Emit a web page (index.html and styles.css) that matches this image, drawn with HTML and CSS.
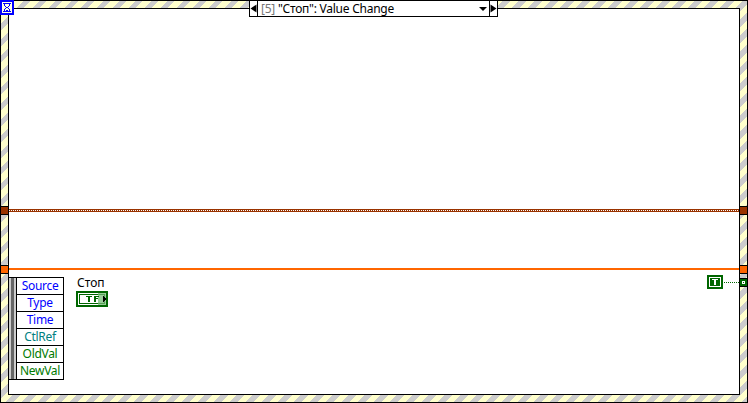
FILE: index.html
```html
<!DOCTYPE html>
<html lang="en">
<head>
<meta charset="utf-8">
<title>Event structure</title>
<link rel="stylesheet" href="styles.css">
</head>
<body>
<main class="event-structure">
  <div class="diagram"></div>

  <svg class="timeout" viewBox="0 0 14 15" shape-rendering="crispEdges">
    <path fill="#0000ff" d="M0 0h14v15H0z"/>
    <path fill="#ffffe6" d="M2 2h10v11H2z"/>
    <path fill="#0000ff" d="M3 3h8v1H3zM4 4h1v2H4zM9 4h1v2H9zM5 6h1v1H5zM8 6h1v1H8zM6 7h2v1H6zM5 8h1v1H5zM8 8h1v1H8zM4 9h1v2H4zM9 9h1v2H9zM6 10h2v1H6zM3 11h8v1H3z"/>
  </svg>

  <header class="selector">
    <span class="step"><svg viewBox="0 0 7 15"><path d="M6.500 3.500v8L.5 7.500z"/></svg></span>
    <span class="case"><span class="index">[5]</span> "Стоп": Value Change</span>
    <svg class="drop" viewBox="0 0 8 4"><path d="M0 0h8L4 4z"/></svg>
    <span class="step next"><svg viewBox="0 0 7 15"><path d="M.5 3.500v8l6-4z"/></svg></span>
  </header>

  <div class="wire cluster"></div>
  <div class="wire numeric"></div>
  <i class="tunnel brown left"></i>
  <i class="tunnel brown right"></i>
  <i class="tunnel orange left"></i>
  <i class="tunnel orange right"></i>

  <section class="event-data">
    <div class="grip"></div>
    <ul>
      <li>Source</li>
      <li>Type</li>
      <li>Time</li>
      <li class="ref">CtlRef</li>
      <li class="val">OldVal</li>
      <li class="val">NewVal</li>
    </ul>
  </section>

  <div class="control">
    <span class="label">Стоп</span>
    <svg class="terminal" viewBox="0 0 32 16" shape-rendering="crispEdges">
      <path fill="#006600" d="M0 0h32v16H0z"/>
      <path fill="#fff" d="M2 2h28v12H2z"/>
      <path fill="#006600" d="M3 3h26v10H3z"/>
      <path fill="#fff" d="M4 4h24v8H4z"/>
      <path fill="#99cc99" d="M22 2h8v12h-8z"/>
      <path fill="#55a055" d="M22 3h7v10h-7v-1h6V4h-6z"/>
      <path fill="#006600" d="M10 5h6v1h-6zM12 6h2v5h-2zM18 5h5v1h-5zM18 6h2v5h-2zM20 7h2v1h-2z"/>
      <path fill="#000" d="M27 5h1v1h1v1h1v2h-1v1h-1v1h-1z"/>
    </svg>
  </div>

  <div class="constant">
    <svg viewBox="0 0 16 14" shape-rendering="crispEdges">
      <path fill="#006600" d="M0 0h16v14H0z"/>
      <path fill="#fff" d="M2 2h12v10H2z"/>
      <path fill="#006600" d="M3 3h10v8H3z"/>
      <path fill="#fff" d="M5 4h6v1H5zM7 5h2v5H7z"/>
    </svg>
    <i class="bool-wire"></i>
    <svg class="bool-tunnel" viewBox="0 0 9 9" shape-rendering="crispEdges">
      <path d="M0 0h9v9H0z"/>
      <path fill="#006600" d="M1 1h7v7H1z"/>
      <path fill="#fff" d="M3 3h3v3H3z"/>
      <path fill="#006600" d="M4 4h1v1H4z"/>
    </svg>
  </div>
</main>
</body>
</html>
```
FILE: styles.css
```css
body {
  margin: 0;
  background: #fff;
  font: 12px/16px "Noto Sans", "Open Sans", sans-serif;
  color: #000;
}

/* striped frame around the diagram */
.event-structure {
  position: relative;
  box-sizing: border-box;
  width: 748px;
  height: 403px;
  padding: 8px;
  background: repeating-linear-gradient(135deg, #ffffcc 0 5.657px, #cccccc 5.657px 11.3137px);
}
.event-structure::after {
  content: "";
  position: absolute;
  inset: 0;
  border: 1px solid #000;
}
.diagram {
  box-sizing: border-box;
  height: 387px;
  border: 1px solid #000;
  background: #fff;
}

.timeout {
  position: absolute;
  z-index: 1;
  left: 0;
  top: 0;
  width: 14px;
  height: 15px;
}

.selector {
  position: absolute;
  z-index: 1;
  left: 249px;
  top: 0;
  display: flex;
  align-items: center;
  box-sizing: border-box;
  width: 249px;
  height: 17px;
  border: 1px solid #000;
  background: #fff;
}
.step {
  display: flex;
  width: 7px;
  height: 15px;
  border-right: 1px solid #000;
}
.step.next {
  border-right: 0;
  border-left: 1px solid #000;
}
.step svg { width: 7px; height: 15px; }
.case {
  flex: 1;
  padding-left: 3px;
  white-space: nowrap;
  letter-spacing: -0.25px;
}
.index { color: #777; }
.drop { width: 8px; height: 4px; margin-right: 2px; }

.wire {
  position: absolute;
  left: 9px;
  right: 9px;
}
.cluster {
  top: 209px;
  height: 1px;
  border: solid #993300;
  border-width: 1px 0;
  background: repeating-linear-gradient(90deg, #fff 0 1px, #993300 1px 2px);
}
.numeric {
  top: 268px;
  height: 2px;
  background: #ff6600;
}

.tunnel {
  position: absolute;
  z-index: 1;
  box-sizing: border-box;
  width: 9px;
  height: 9px;
  border: 1px solid #000;
}
.left { left: 0; }
.right { right: 0; }
.brown { top: 206px; background: #993300; }
.orange { top: 265px; background: #ff6600; }

.event-data {
  position: absolute;
  left: 9px;
  top: 277px;
  display: flex;
}
.grip {
  box-sizing: border-box;
  width: 7px;
  height: 103px;
  border: solid #000;
  border-width: 1px 0;
  background: linear-gradient(90deg, #ccc 2px, #666 2px 5px, #ccc 5px);
}
.event-data ul {
  box-sizing: border-box;
  width: 48px;
  margin: 0;
  padding: 0;
  list-style: none;
  border: 1px solid #000;
  border-bottom: 0;
}
.event-data li {
  height: 16px;
  border-bottom: 1px solid #000;
  text-align: center;
  letter-spacing: -0.3px;
  color: #0000ff;
}
.event-data .ref { color: #008080; }
.event-data .val { color: #007a00; }

.control {
  position: absolute;
  left: 76px;
  top: 275px;
  display: flex;
  flex-direction: column;
}
.label { padding-left: 1px; }
.terminal { width: 32px; height: 16px; }

.constant {
  position: absolute;
  z-index: 1;
  left: 707px;
  top: 275px;
  display: flex;
  align-items: center;
}
.constant svg { width: 16px; height: 14px; }
.bool-wire {
  width: 16px;
  height: 1px;
  background: repeating-linear-gradient(90deg, #fff 0 1px, #006600 1px 2px);
}
.constant .bool-tunnel {
  width: 9px;
  height: 9px;
}
```
